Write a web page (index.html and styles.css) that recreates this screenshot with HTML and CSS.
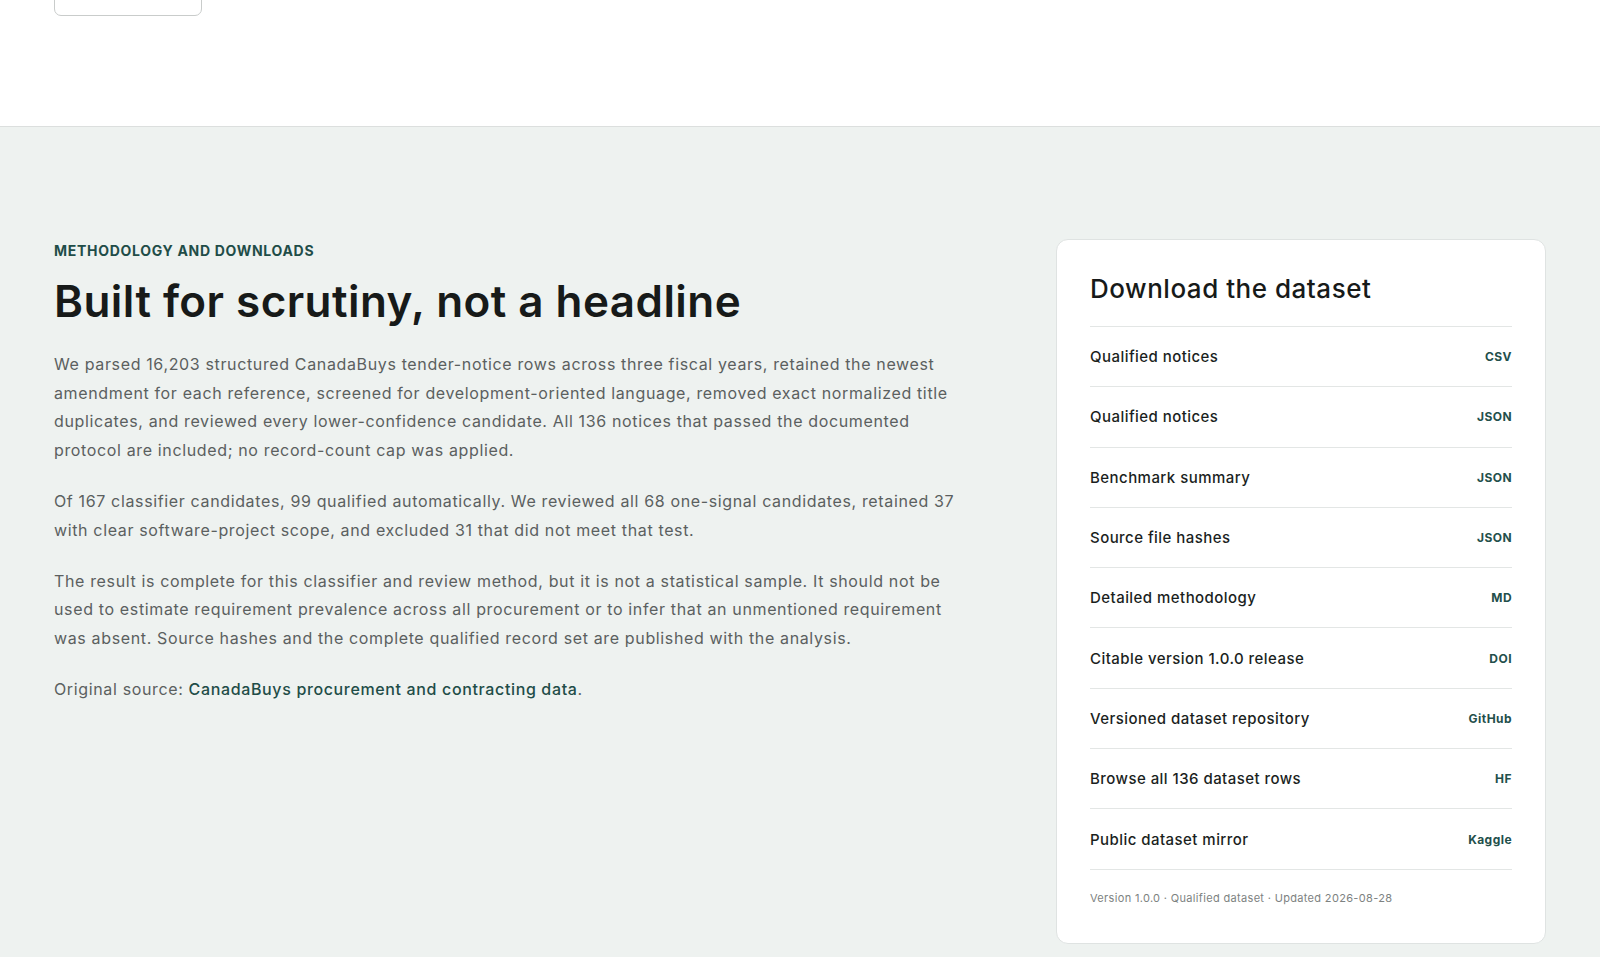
FILE: index.html
```html
<!DOCTYPE html>
<html lang="en">
<head>
  <meta charset="UTF-8">
  <meta name="viewport" content="width=device-width, initial-scale=1.0">
  <title>Methodology and downloads</title>
  <link rel="stylesheet" href="styles.css">
</head>
<body>
  <header class="top">
    <div class="wrap">
      <a href="#" class="ghost-button" aria-label="Back to top"></a>
    </div>
  </header>

  <section class="methodology">
    <div class="wrap grid">
      <div class="copy">
        <p class="eyebrow">Methodology and downloads</p>
        <h1>Built for scrutiny, not a headline</h1>
        <p>We parsed 16,203 structured CanadaBuys tender-notice rows across three fiscal years, retained the newest amendment for each reference, screened for development-oriented language, removed exact normalized title duplicates, and reviewed every lower-confidence candidate. All 136 notices that passed the documented protocol are included; no record-count cap was applied.</p>
        <p>Of 167 classifier candidates, 99 qualified automatically. We reviewed all 68 one-signal candidates, retained 37 with clear software-project scope, and excluded 31 that did not meet that test.</p>
        <p>The result is complete for this classifier and review method, but it is not a statistical sample. It should not be used to estimate requirement prevalence across all procurement or to infer that an unmentioned requirement was absent. Source hashes and the complete qualified record set are published with the analysis.</p>
        <p>Original source: <a href="#" class="source-link">CanadaBuys procurement and contracting data</a>.</p>
      </div>

      <aside class="card">
        <h2>Download the dataset</h2>
        <ul class="downloads">
          <li><a href="#"><span>Qualified notices</span><span class="tag">CSV</span></a></li>
          <li><a href="#"><span>Qualified notices</span><span class="tag">JSON</span></a></li>
          <li><a href="#"><span>Benchmark summary</span><span class="tag">JSON</span></a></li>
          <li><a href="#"><span>Source file hashes</span><span class="tag">JSON</span></a></li>
          <li><a href="#"><span>Detailed methodology</span><span class="tag">MD</span></a></li>
          <li><a href="#"><span>Citable version 1.0.0 release</span><span class="tag">DOI</span></a></li>
          <li><a href="#"><span>Versioned dataset repository</span><span class="tag">GitHub</span></a></li>
          <li><a href="#"><span>Browse all 136 dataset rows</span><span class="tag">HF</span></a></li>
          <li><a href="#"><span>Public dataset mirror</span><span class="tag">Kaggle</span></a></li>
        </ul>
        <p class="meta">Version 1.0.0 · Qualified dataset · Updated 2026-08-28</p>
      </aside>
    </div>
  </section>
</body>
</html>
```

FILE: styles.css
```css
body {
  font-family: Inter, 'Noto Sans', sans-serif;
  background-color: #eef2f0;
  color: #1b1f1e;
  margin: 0;
  padding: 0;
}

.wrap {
  max-width: 1492px;
  margin: 0 auto;
  padding: 0 54px;
}

.top {
  background-color: #ffffff;
  border-bottom: 1px solid #dcdfde;
  height: 126px;
  overflow: hidden;
}

.ghost-button {
  display: block;
  width: 148px;
  height: 46px;
  margin-top: -30px;
  box-sizing: border-box;
  border: 1px solid #c9cccb;
  border-radius: 7px;
}

.methodology {
  padding: 112px 0 15px;
}

.grid {
  display: grid;
  grid-template-columns: minmax(0, 1fr) 490px;
  gap: 90px;
  align-items: start;
}

.copy {
  max-width: 910px;
}

.eyebrow {
  margin: 3px 0 0;
  font-size: 14px;
  font-weight: 700;
  color: #1f4d48;
  text-transform: uppercase;
  letter-spacing: 0.05em;
}

h1 {
  margin: 16px 0 22px;
  font-size: 44px;
  line-height: 1.2;
  font-weight: 600;
  letter-spacing: 0.01em;
  color: #171a19;
}

.copy p:not(.eyebrow) {
  margin: 0 0 22px;
  font-size: 16px;
  line-height: 1.8;
  letter-spacing: 0.04em;
  color: #5b605f;
}

.source-link {
  color: #1f4d48;
  font-weight: 500;
  text-decoration: none;
}

.card {
  background-color: #ffffff;
  border: 1px solid #dfe3e2;
  border-radius: 12px;
  padding: 31px 33px 38px;
}

.card h2 {
  margin: 0;
  padding-bottom: 19px;
  font-size: 26px;
  line-height: 36px;
  font-weight: 500;
  letter-spacing: 0.02em;
  color: #171a19;
  border-bottom: 1px solid #e3e6e5;
}

.downloads {
  list-style: none;
  margin: 0;
  padding: 0;
}

.downloads li {
  border-bottom: 1px solid #e3e6e5;
}

.downloads a {
  display: flex;
  justify-content: space-between;
  align-items: center;
  height: 59.3px;
  font-size: 15px;
  font-weight: 500;
  letter-spacing: 0.03em;
  color: #1b1f1e;
  text-decoration: none;
}

.tag {
  font-size: 12px;
  font-weight: 700;
  color: #234f4b;
}

.meta {
  margin: 21px 0 0;
  font-size: 11px;
  letter-spacing: 0.03em;
  color: #7d8281;
}
```
